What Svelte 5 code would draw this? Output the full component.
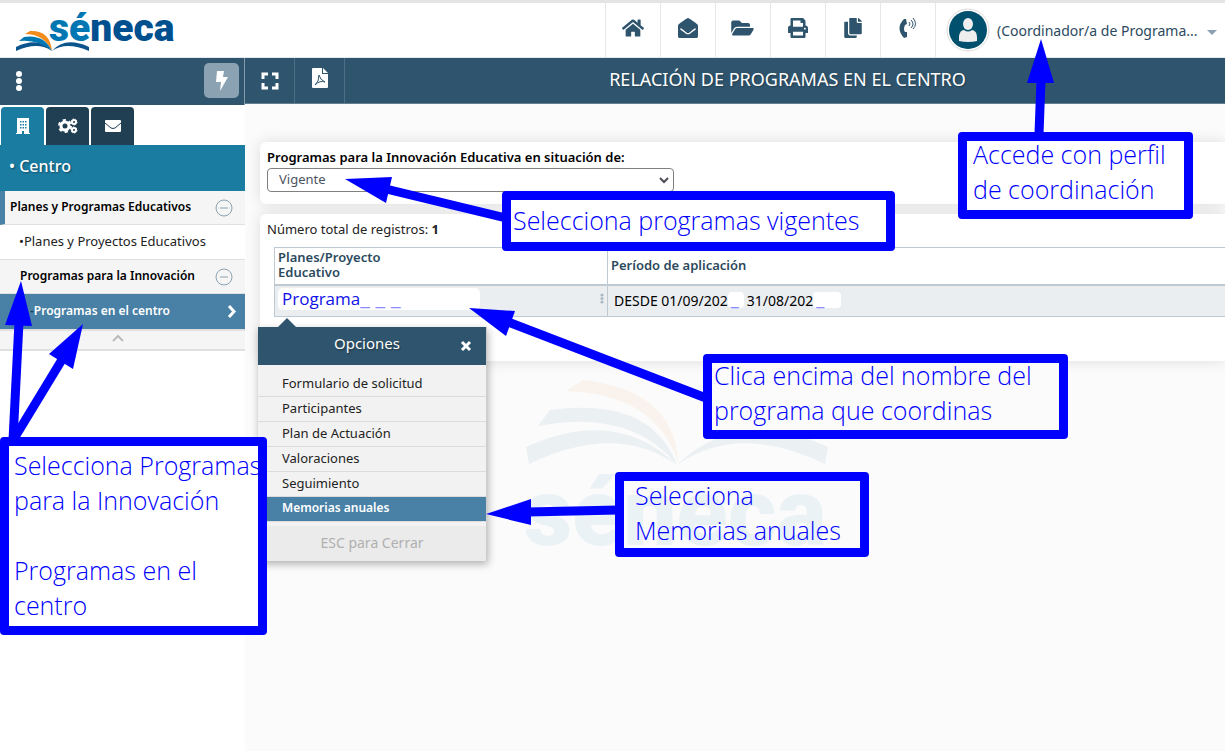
<script lang="ts">
	type Icon = { label: string; box: string; size: number; path: string };

	const actions: Icon[] = [
		{
			label: 'Inicio',
			box: '0 0 576 512',
			size: 22,
			path: 'M280.37 148.26L96 300.11V464a16 16 0 0 0 16 16l112.06-.29a16 16 0 0 0 15.92-16V368a16 16 0 0 1 16-16h64a16 16 0 0 1 16 16v95.64a16 16 0 0 0 16 16.05L464 480a16 16 0 0 0 16-16V300L295.67 148.26a12.19 12.19 0 0 0-15.3 0zM571.6 251.47L488 182.56V44.05a12 12 0 0 0-12-12h-56a12 12 0 0 0-12 12v72.61L318.47 43a48 48 0 0 0-61 0L4.34 251.47a12 12 0 0 0-1.6 16.9l25.5 31A12 12 0 0 0 45.15 301l235.22-193.74a12.19 12.19 0 0 1 15.3 0L530.9 301a12 12 0 0 0 16.9-1.6l25.5-31a12 12 0 0 0-1.7-16.93z'
		},
		{
			label: 'Mensajes',
			box: '0 0 512 512',
			size: 20,
			path: 'M512 464c0 26.51-21.49 48-48 48H48c-26.51 0-48-21.49-48-48V200.724a48 48 0 0 1 18.387-37.776c24.913-19.529 45.501-35.365 164.2-121.511C199.412 29.17 232.797-.347 256 .003c23.198-.354 56.596 29.172 73.413 41.433 118.687 86.137 139.303 101.995 164.2 121.512A48 48 0 0 1 512 200.724V464zm-65.666-196.605c-2.563-3.728-7.7-4.595-11.339-1.907-22.845 16.873-55.462 40.705-105.582 77.079-16.825 12.266-50.21 41.781-73.413 41.43-23.211.344-56.559-29.143-73.413-41.43-50.114-36.37-82.734-60.204-105.582-77.079-3.639-2.688-8.776-1.821-11.339 1.907l-9.072 13.196a7.998 7.998 0 0 0 1.839 10.967c22.887 16.899 55.454 40.69 105.303 76.868 20.274 14.781 56.524 47.813 92.264 47.573 35.724.242 71.961-32.771 92.263-47.573 49.85-36.179 82.418-59.97 105.303-76.868a7.998 7.998 0 0 0 1.839-10.967l-9.071-13.196z'
		},
		{
			label: 'Documentos',
			box: '0 0 576 512',
			size: 23,
			path: 'M572.694 292.093L500.27 416.248A63.997 63.997 0 0 1 444.989 448H45.025c-18.523 0-30.064-20.093-20.731-36.093l72.424-124.155A64 64 0 0 1 152 256h399.964c18.523 0 30.064 20.093 20.73 36.093zM152 224h328v-48c0-26.51-21.49-48-48-48H272l-64-64H48C21.49 64 0 85.49 0 112v278.046l69.077-118.418C86.214 242.25 117.989 224 152 224z'
		},
		{
			label: 'Imprimir',
			box: '0 0 512 512',
			size: 20,
			path: 'M448 192V77.25c0-8.49-3.37-16.62-9.37-22.63L393.37 9.37c-6-6-14.14-9.37-22.63-9.37H96C78.33 0 64 14.33 64 32v160c-35.35 0-64 28.65-64 64v112c0 8.84 7.16 16 16 16h48v96c0 17.67 14.33 32 32 32h320c17.67 0 32-14.33 32-32v-96h48c8.84 0 16-7.16 16-16V256c0-35.35-28.65-64-64-64zm-64 256H128v-96h256v96zm0-224H128V64h192v48c0 8.84 7.16 16 16 16h48v96zm48 72c-13.25 0-24-10.75-24-24 0-13.26 10.75-24 24-24s24 10.74 24 24c0 13.25-10.75 24-24 24z'
		},
		{
			label: 'Copiar',
			box: '0 0 448 512',
			size: 18,
			path: 'M320 448v40c0 13.255-10.745 24-24 24H24c-13.255 0-24-10.745-24-24V120c0-13.255 10.745-24 24-24h72v296c0 30.879 25.121 56 56 56h168zm0-344V0H152c-13.255 0-24 10.745-24 24v368c0 13.255 10.745 24 24 24h272c13.255 0 24-10.745 24-24V128H344c-13.2 0-24-10.8-24-24zm120.971-31.029L375.029 7.029A24 24 0 0 0 358.059 0H352v96h96v-6.059a24 24 0 0 0-7.029-16.97z'
		}
	];

	const options = [
		'Formulario de solicitud',
		'Participantes',
		'Plan de Actuación',
		'Valoraciones',
		'Seguimiento',
		'Memorias anuales'
	];
	let selected = $state('Memorias anuales');

	// callouts and arrows share one canvas over the page
	const notes = [
		{ id: 'perfil', lines: ['Accede con perfil', 'de coordinación'] },
		{ id: 'vigentes', lines: ['Selecciona programas vigentes'] },
		{ id: 'nombre', lines: ['Clica encima del nombre del', 'programa que coordinas'] },
		{ id: 'memorias', lines: ['Selecciona', 'Memorias anuales'] },
		{ id: 'innovacion', lines: ['Selecciona Programas', 'para la Innovación', '', 'Programas en el', 'centro'] }
	];
	const arrows = [
		{ head: '1041,39 1027,83 1054,83', line: [1041, 80, 1039, 134] },
		{ head: '345,179 392,177 386,203', line: [386, 189, 506, 218] },
		{ head: '469,308 515,311 506,336', line: [508, 322, 706, 398] },
		{ head: '486,514 531,499 531,525', line: [528, 512, 618, 510] },
		{ head: '21,281 5,325 32,326', line: [19, 322, 13, 440] },
		{ head: '83,324 49,354 73,369', line: [63, 358, 12, 442] }
	];
</script>

<div class="page">
	<header>
		<a class="brand" href="#inicio" aria-label="séneca">
			<svg width="162" height="46" viewBox="0 0 162 46">
				<path d="M1 39 Q24 28 37 43 Q23 33 1 43Z M74 39 Q50 28 37 43 Q51 33 74 43Z" fill="#0b548c" />
				<path d="M4 33 L9 29 Q29 26 37 43 Q23 31 4 33Z" fill="#0077b3" />
				<path d="M10 26 L15 23 Q35 22 37 43 Q29 26 10 26Z" fill="#f28a1c" />
				<text x="34" y="33" class="logo-text"><tspan fill="#0077b3">sé</tspan><tspan fill="#00508f">neca</tspan></text>
			</svg>
		</a>
		<nav class="actions" aria-label="Acciones">
			{#each actions as icon}
				<button aria-label={icon.label}>
					<svg width={icon.size} height="20" viewBox={icon.box}><path d={icon.path} /></svg>
				</button>
			{/each}
			<button aria-label="Teléfono">
				<svg width="18" height="22" viewBox="0 0 18 22">
					<path d="M5 2 L7 2 L8 7 L6 8 Q4 12 6 15 L8 15 L8 20 L5 21 Q-4 11 5 2Z" />
					<path class="wave" d="M10 5 Q12 7 10 9 M12 3 Q16 7 12 11 M14 1 Q19 7 14 12" />
				</svg>
			</button>
		</nav>
		<button class="profile">
			<svg width="44" height="44" viewBox="0 0 44 44">
				<circle cx="22" cy="22" r="21" fill="#fff" stroke="#ddd" />
				<circle cx="22" cy="22" r="19" fill="#00506e" />
				<ellipse cx="22" cy="16" rx="5" ry="6" fill="#eee" />
				<path d="M13 33 V28 Q14 22 18 22 Q22 25 26 22 Q31 23 31 29 V33 Q22 35 13 33Z" fill="#eee" />
			</svg>
			<span>(Coordinador/a de Programa...</span>
			<svg width="10" height="5" viewBox="0 0 10 5"><path d="M0 0H10L5 5Z" fill="#8ba2b5" /></svg>
		</button>
	</header>

	<div class="body">
		<aside>
			<div class="side-bar">
				<button class="dots" aria-label="Menú">
					<svg width="8" height="22" viewBox="0 0 8 22"><circle cx="4" cy="4" r="3" /><circle cx="4" cy="11" r="3" /><circle cx="4" cy="18" r="3" /></svg>
				</button>
				<button class="bolt" aria-label="Acceso rápido">
					<svg width="14" height="20" viewBox="0 0 14 20"><path d="M2 0H9L8 6H13L5 20L6 11H1Z" /></svg>
				</button>
			</div>
			<div class="tabs">
				<button class="tab active" aria-label="Centro">
					<svg width="14" height="16" viewBox="0 0 14 16">
						<path fill-rule="evenodd" d="M1 0H13V15H14V16H8V13H6V16H0V15H1ZM4 3V4.500H5.500V3ZM6.500 3V4.500H8V3ZM9 3V4.500H10.500V3ZM4 6V7.500H5.500V6ZM6.500 6V7.500H8V6ZM9 6V7.500H10.500V6ZM4 9V10.500H5.500V9ZM6.500 9V10.500H8V9ZM9 9V10.500H10.500V9Z" />
					</svg>
				</button>
				<button class="tab" aria-label="Configuración">
					<svg width="20" height="16" viewBox="0 0 20 16">
						<circle class="gear" cx="7" cy="8" r="4" stroke-width="3" />
						<circle class="gear" cx="7" cy="8" r="6" stroke-width="2" stroke-dasharray="3.2 3.1" />
						<circle class="gear" cx="16" cy="4" r="2" stroke-width="2" />
						<circle class="gear" cx="16" cy="4" r="3" stroke-width="1" stroke-dasharray="1.6 1.5" />
						<circle class="gear" cx="16" cy="12" r="2" stroke-width="2" />
						<circle class="gear" cx="16" cy="12" r="3" stroke-width="1" stroke-dasharray="1.6 1.5" />
					</svg>
				</button>
				<button class="tab" aria-label="Correo">
					<svg width="16" height="12" viewBox="0 0 16 12">
						<rect width="16" height="12" rx="1" />
						<path d="M0 3 L6 8 Q8 9 10 8 L16 3" fill="none" stroke="#203f52" />
					</svg>
				</button>
			</div>
			<h2>• Centro</h2>
			<ul class="menu">
				<li class="group first">
					<a href="#planes">Planes y Programas Educativos</a>
					<svg width="18" height="18" viewBox="0 0 18 18"><circle cx="9" cy="9" r="8" /><path d="M5 9H13" /></svg>
				</li>
				<li class="leaf"><a href="#proyectos">•Planes y Proyectos Educativos</a></li>
				<li class="group sub">
					<a href="#innovacion">Programas para la Innovación</a>
					<svg width="18" height="18" viewBox="0 0 18 18"><circle cx="9" cy="9" r="8" /><path d="M5 9H13" /></svg>
				</li>
				<li class="current">
					<a href="#centro"><i>-</i>Programas en el centro</a>
					<svg width="10" height="15" viewBox="0 0 10 15"><path d="M2 2L7 7.5L2 13" /></svg>
				</li>
			</ul>
			<button class="collapse" aria-label="Contraer">
				<svg width="12" height="8" viewBox="0 0 12 8"><path d="M1 7L6 2L11 7" /></svg>
			</button>
		</aside>

		<main>
			<div class="title-bar">
				<button aria-label="Pantalla completa">
					<svg width="18" height="18" viewBox="0 0 18 18"><path class="corners" d="M2 7V2H7 M11 2H16V7 M16 11V16H11 M7 16H2V11" /></svg>
				</button>
				<button aria-label="Exportar PDF">
					<svg class="pdf" width="16" height="20" viewBox="0 0 16 20">
						<path d="M1 0H10V6H16V19Q16 20 15 20H1Q0 20 0 19V1Q0 0 1 0ZM11 0L16 5H11Z" />
						<path class="squiggle" d="M7 7Q8 12 13 14Q8 12 3 17Q7 14 7 7" />
					</svg>
				</button>
				<h1>RELACIÓN DE PROGRAMAS EN EL CENTRO</h1>
			</div>

			<svg class="watermark" width="304" height="170" viewBox="0 0 304 170">
				<path d="M0 67 Q90 26 151 85 Q90 42 3 84Z M302 67 Q212 26 151 85 Q212 42 299 84Z" fill="#005083" />
				<path d="M24 30 Q125 16 151 85 Q105 28 12 46Z" fill="#005083" />
				<path d="M57 0 Q148 10 152 82 Q130 14 40 11Z" fill="#f28a1c" />
				<text x="-2" y="165">séneca</text>
			</svg>

			<section class="card filter">
				<label for="situacion">Programas para la Innovación Educativa en situación de:</label>
				<div class="select">
					<select id="situacion">
						<option>Vigente</option>
					</select>
					<svg width="10" height="7" viewBox="0 0 10 7"><path d="M1 1L5 5L9 1" /></svg>
				</div>
			</section>

			<section class="card list">
				<p>Número total de registros: <b>1</b></p>
				<table>
					<thead>
						<tr>
							<th class="name">Planes/Proyecto<br />Educativo</th>
							<th>Período de aplicación</th>
						</tr>
					</thead>
					<tbody>
						<tr>
							<td class="name">
								<div class="cell">
									<a class="patch" href="#programa">Programa<i>_ _ _</i></a>
									<svg width="4" height="11" viewBox="0 0 4 11"><circle cx="2" cy="2" r="1.6" /><circle cx="2" cy="5.5" r="1.6" /><circle cx="2" cy="9" r="1.6" /></svg>
									<div class="popup">
										<div class="popup-head">
											<span>Opciones</span>
											<button aria-label="Cerrar">
												<svg width="12" height="12" viewBox="0 0 12 12"><path d="M2 2L10 10M10 2L2 10" /></svg>
											</button>
										</div>
										<ul>
											{#each options as option}
												<li>
													<button class:selected={option === selected} onclick={() => (selected = option)}>{option}</button>
												</li>
											{/each}
										</ul>
										<div class="popup-foot">ESC para Cerrar</div>
									</div>
								</div>
							</td>
							<td>
								<div class="dates">
									<span>DESDE 01/09/202</span><i>_</i>
									<span class="until">31/08/202</span><i class="wide">_</i>
								</div>
							</td>
						</tr>
					</tbody>
				</table>
			</section>
		</main>
	</div>

	<svg class="arrows" width="1225" height="751" viewBox="0 0 1225 751">
		{#each arrows as { head, line }}
			<polygon points={head} />
			<line x1={line[0]} y1={line[1]} x2={line[2]} y2={line[3]} />
		{/each}
	</svg>
	{#each notes as note}
		<div class="note {note.id}">
			{#each note.lines as line}
				<div>{line}</div>
			{/each}
		</div>
	{/each}
</div>

<style>
	:global(body) {
		margin: 0;
	}

	.page {
		position: relative;
		display: flex;
		flex-direction: column;
		min-height: 100vh;
		overflow: hidden;
		font-family: "Noto Sans", "Open Sans", sans-serif;
		font-size: 13px;
		color: #222;
		background: #fff;
	}

	.page * {
		box-sizing: border-box;
	}

	button {
		padding: 0;
		border: 0;
		background: none;
		font: inherit;
		color: inherit;
		cursor: pointer;
	}

	a {
		color: inherit;
		text-decoration: none;
	}

	ul {
		list-style: none;
		margin: 0;
		padding: 0;
	}

	svg {
		display: block;
		flex-shrink: 0;
	}

	i {
		font-style: normal;
	}

	header {
		display: flex;
		height: 58px;
		border-top: 3px solid #e4e4e4;
		border-bottom: 1px solid #e4e8ec;
	}

	.brand {
		padding: 5px 0 0 15px;
	}

	.brand svg {
		overflow: visible;
	}

	.logo-text {
		font-family: Roboto, sans-serif;
		font-size: 39px;
		font-weight: 900;
	}

	.actions {
		display: flex;
		margin-left: auto;
	}

	.actions button {
		display: flex;
		align-items: center;
		justify-content: center;
		width: 55px;
		padding: 0 1px 4px 0;
		border-left: 1px solid #e6e6e6;
		fill: #2f556e;
	}

	.wave {
		fill: none;
		stroke: #2f556e;
	}

	.profile {
		display: flex;
		align-items: center;
		width: 290px;
		padding-left: 10px;
		border-left: 1px solid #e6e6e6;
		color: #2c4a5e;
		font-size: 14px;
	}

	.profile span {
		flex: 1;
		padding-left: 7px;
		text-align: left;
		white-space: nowrap;
	}

	.profile svg:last-child {
		margin: 4px 8px 0 0;
	}

	.body {
		display: flex;
		flex: 1;
	}

	aside {
		width: 245px;
		flex-shrink: 0;
	}

	.side-bar {
		display: flex;
		align-items: center;
		justify-content: space-between;
		height: 47px;
		padding: 0 5px 2px 15px;
		border-right: 1px solid #8299a8;
		background: #2f556e;
		fill: #fff;
	}

	.bolt {
		display: flex;
		align-items: center;
		justify-content: center;
		width: 35px;
		height: 35px;
		border-radius: 5px;
		background: #8ba2b2;
	}

	.tabs {
		display: flex;
		gap: 2px;
		padding: 2px 1px 0;
	}

	.tab {
		display: flex;
		align-items: center;
		justify-content: center;
		width: 43px;
		height: 38px;
		border-radius: 4px 4px 0 0;
		background: #203f52;
		fill: #fff;
	}

	.tab.active {
		background: #1b7ca2;
	}

	.gear {
		fill: none;
		stroke: #fff;
	}

	h2 {
		margin: 0;
		padding: 0 9px 4px;
		background: #1b7ca2;
		color: #fff;
		font-size: 16px;
		font-weight: 500;
		line-height: 42px;
		text-shadow: 1px 1px 2px rgba(0, 0, 0, 0.4);
	}

	.menu li {
		display: flex;
		align-items: center;
		justify-content: space-between;
		height: 34px;
		padding-right: 12px;
		border-bottom: 1px solid #e0e0e0;
		white-space: nowrap;
	}

	.menu a {
		padding-bottom: 2px;
	}

	.menu .group {
		background: #f5f5f5;
		color: #000;
		font-weight: 600;
		font-size: 12px;
	}

	.group svg {
		fill: none;
		stroke: #8ba2b2;
	}

	.menu .first {
		padding-left: 5px;
		border-left: 5px solid #4880a6;
	}

	.menu .leaf {
		height: 35px;
		padding-left: 19px;
	}

	.menu .sub {
		padding-left: 20px;
	}

	.menu .current {
		height: 35px;
		padding: 0 8px 0 30px;
		border: 0;
		background: #4880a6;
		color: #fff;
		font-size: 12px;
		font-weight: 600;
	}

	.current i {
		color: #203f52;
	}

	.current svg {
		fill: none;
		stroke: #fff;
		stroke-width: 3;
	}

	.collapse {
		display: flex;
		align-items: center;
		justify-content: center;
		width: 100%;
		height: 22px;
		padding: 0 10px 5px 0;
		border-top: 2px solid #e0e0e0;
		border-bottom: 2px solid #e0e0e0;
		background: #f5f5f5;
	}

	.collapse svg {
		fill: none;
		stroke: #bbb;
		stroke-width: 2;
	}

	main {
		position: relative;
		flex: 1;
		min-width: 0;
		background: #fbfbfb;
	}

	.title-bar {
		display: flex;
		height: 46px;
		background: #2f556e;
		border-bottom: 1px solid #64808f;
		color: #fff;
	}

	.title-bar button {
		display: flex;
		align-items: center;
		justify-content: center;
		width: 50px;
		border-right: 1px solid #4d6e85;
		fill: #fff;
	}

	.corners {
		fill: none;
		stroke: #fff;
		stroke-width: 3;
	}

	.pdf {
		margin-bottom: 6px;
	}

	.squiggle {
		fill: none;
		stroke: #2f556e;
	}

	h1 {
		flex: 1;
		margin: 0;
		padding-left: 5px;
		font-size: 18px;
		font-weight: 400;
		line-height: 42px;
		text-align: center;
		text-shadow: 1px 1px 2px rgba(0, 0, 0, 0.3);
	}

	.watermark {
		position: absolute;
		left: 281px;
		top: 322px;
		overflow: visible;
		opacity: 0.06;
	}

	.watermark text {
		font-family: Roboto, sans-serif;
		font-size: 94px;
		font-weight: 900;
		fill: #0077b3;
	}

	.card {
		position: relative;
		margin-left: 15px;
		padding-left: 7px;
		border-radius: 6px 0 0 6px;
		background: #fff;
		box-shadow: 0 0 15px rgba(0, 0, 0, 0.12);
	}

	.filter {
		margin-top: 38px;
		padding-top: 6px;
		padding-bottom: 12px;
	}

	.filter label {
		display: block;
		padding-bottom: 2px;
		color: #000;
		font-size: 13px;
		font-weight: 600;
		line-height: 18px;
	}

	.select {
		display: flex;
		align-items: center;
		width: 407px;
		height: 24px;
	}

	.select select {
		width: 100%;
		height: 24px;
		padding: 0 11px 2px;
		border: 1px solid #808080;
		border-radius: 4px;
		appearance: none;
		background: #fff;
		color: #4c5560;
		font: inherit;
	}

	.select svg {
		margin-left: -15px;
		fill: none;
		stroke: #4c4c55;
		stroke-width: 2;
		pointer-events: none;
	}

	.list {
		margin-top: 10px;
		padding-top: 5px;
		padding-bottom: 44px;
	}

	.list p {
		margin: 0 0 8px;
		line-height: 20px;
	}

	table {
		width: calc(100% - 7px);
		margin-left: 7px;
		border-collapse: separate;
		border-spacing: 0;
		border-top: 1px solid #bfc9d1;
		border-left: 1px solid #bfc9d1;
	}

	th {
		height: 38px;
		padding: 0 3px 2px;
		border-bottom: 2px solid #bfc9d1;
		color: #2c4a5e;
		font-size: 13px;
		font-weight: 600;
		line-height: 15px;
		text-align: left;
	}

	td {
		height: 31px;
		padding: 0 3px;
		border-bottom: 1px solid #bfc9d1;
		background: #ebeef1;
	}

	.name {
		width: 333px;
		border-right: 1px solid #bfc9d1;
	}

	.cell {
		position: relative;
		display: flex;
		align-items: center;
		justify-content: space-between;
		padding-bottom: 5px;
	}

	.cell > svg {
		fill: #aab8c2;
	}

	.patch {
		width: 202px;
		height: 22px;
		padding-left: 4px;
		border-radius: 5px;
		background: #fff;
		color: #1010e8;
		font-family: "Open Sans", sans-serif;
		font-size: 17px;
		line-height: 22px;
	}

	.patch i,
	.dates i {
		color: #8c8cff;
	}

	.patch i {
		font-size: 22px;
		line-height: 16px;
	}

	.dates {
		display: flex;
		align-items: center;
		padding: 0 0 2px 3px;
		color: #000;
		font-size: 14px;
	}

	.dates i {
		width: 16px;
		padding-left: 3px;
		border-radius: 4px;
		background: #fff;
		font-size: 18px;
		line-height: 12px;
		height: 16px;
	}

	.dates .until {
		padding-left: 3px;
	}

	.dates .wide {
		width: 28px;
	}

	.popup {
		position: absolute;
		left: -20px;
		top: 39px;
		z-index: 2;
		width: 229px;
		border-right: 1px solid #ccc;
		background: #f2f2f2;
		box-shadow: 1px 3px 8px rgba(0, 0, 0, 0.3);
	}

	.popup::before {
		content: "";
		position: absolute;
		left: 20px;
		top: -9px;
		border: 9px solid transparent;
		border-top: 0;
		border-bottom-color: #2f556e;
	}

	.popup-head {
		display: flex;
		align-items: center;
		height: 38px;
		padding-right: 14px;
		background: #2f556e;
		color: #fff;
		font-size: 15px;
		text-shadow: 1px 1px 2px rgba(0, 0, 0, 0.4);
	}

	.popup-head span {
		flex: 1;
		padding: 0 0 6px 16px;
		text-align: center;
	}

	.popup-head path {
		stroke: #fff;
		stroke-width: 3;
	}

	.popup ul {
		padding: 7px 0 4px;
	}

	.popup li button {
		display: block;
		width: 100%;
		height: 25px;
		padding: 0 24px 2px;
		border-bottom: 1px solid #dcdcdc;
		text-align: left;
	}

	.popup li .selected {
		background: #4880a6;
		color: #fff;
		font-size: 12px;
		font-weight: 600;
	}

	.popup-foot {
		height: 35px;
		background: #ebebeb;
		color: #b0b0b0;
		font-size: 14px;
		line-height: 33px;
		text-align: center;
	}

	.arrows {
		position: absolute;
		left: 0;
		top: 0;
		z-index: 3;
		fill: #00f;
		stroke: #00f;
		stroke-width: 9;
		pointer-events: none;
	}

	.arrows polygon {
		stroke: none;
	}

	.note {
		position: absolute;
		z-index: 4;
		display: grid;
		align-content: end;
		border: 9px solid #00f;
		border-radius: 4px;
		color: #00f;
		font-family: "Open Sans", sans-serif;
		font-size: 25px;
		font-weight: 300;
		line-height: 35px;
		white-space: nowrap;
	}

	.note div {
		height: 35px;
	}

	.perfil {
		left: 958px;
		top: 132px;
		width: 235px;
		height: 87px;
		padding: 0 0 3px 6px;
		background: #fff;
	}

	.vigentes {
		left: 502px;
		top: 191px;
		width: 393px;
		height: 60px;
		padding: 0 0 4px 2px;
		background: #fff;
	}

	.nombre {
		left: 703px;
		top: 354px;
		width: 365px;
		height: 85px;
		padding: 0 0 2px 2px;
		background: #fbfbfb;
	}

	.memorias {
		left: 615px;
		top: 472px;
		width: 254px;
		height: 85px;
		padding-left: 11px;
	}

	.innovacion {
		left: 0;
		top: 437px;
		width: 267px;
		height: 198px;
		padding: 0 0 3px 5px;
		background: #fff;
	}
</style>
